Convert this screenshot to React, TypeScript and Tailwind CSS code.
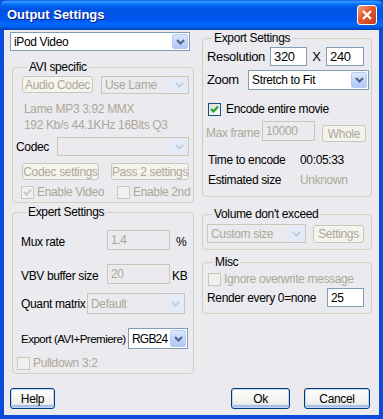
import type { ReactNode } from "react";

const disabledText = "text-[#ACA899]";

function Chevron({ disabled }: { disabled?: boolean }) {
  return (
    <svg width="9" height="6" viewBox="0 0 9 6">
      <polyline
        points="1,1 4.5,4.5 8,1"
        fill="none"
        stroke={disabled ? "#C3CCE0" : "#4D6185"}
        strokeWidth="2"
      />
    </svg>
  );
}

function Combo({ value, disabled, className }: { value?: string; disabled?: boolean; className: string }) {
  return (
    <div
      className={`flex shrink-0 border ${
        disabled ? "border-[#C9C7BA] bg-[#EBEAEE] text-[#ACA899]" : "border-[#7F9DB9] bg-white text-black"
      } ${className}`}
    >
      <span className="flex flex-1 items-center overflow-hidden pl-[3px]">{value}</span>
      <span
        className={`m-[1px] flex w-[16px] shrink-0 items-center justify-center rounded-[2px] border ${
          disabled
            ? "border-[#E1E8F7] bg-[#E4EBF8]"
            : "border-[#B9CCF5] bg-[linear-gradient(to_bottom,#DCE6FC,#C1D3FB_60%,#B1C6F6)]"
        }`}
      >
        <Chevron disabled={disabled} />
      </span>
    </div>
  );
}

function Btn({ label, disabled, className }: { label: string; disabled?: boolean; className: string }) {
  return (
    <div
      className={`flex shrink-0 items-center justify-center rounded-[3px] border ${
        disabled
          ? "border-[#C9C7BA] bg-[#F4F3EE] text-[#ACA899]"
          : "border-[#003C74] bg-[linear-gradient(to_bottom,#FFFFFF,#F1F0EC_70%,#D8DCE6)] text-black shadow-[inset_0_0_0_1px_#C2D5F7,inset_0_-2px_0_1px_#A9C0EC]"
      } ${className}`}
    >
      {label}
    </div>
  );
}

function Field({ value, disabled, className }: { value: string; disabled?: boolean; className: string }) {
  return (
    <div
      className={`flex shrink-0 items-center border pl-[3px] ${
        disabled ? "border-[#C9C7BA] bg-[#EBEAEE] text-[#ACA899]" : "border-[#7F9DB9] bg-white text-black"
      } ${className}`}
    >
      {value}
    </div>
  );
}

function Check({ checked, disabled }: { checked?: boolean; disabled?: boolean }) {
  return (
    <span
      className={`flex h-[13px] w-[13px] shrink-0 items-center justify-center border ${
        disabled
          ? "border-[#CAC8BB] bg-[#F1F0EF]"
          : "border-[#1C5180] bg-[linear-gradient(135deg,#DCDCD7,#FFFFFF)]"
      }`}
    >
      {checked && (
        <svg width="9" height="9" viewBox="0 0 9 9">
          <polyline
            points="1,4 3.5,6.5 8,1.5"
            fill="none"
            stroke={disabled ? "#CAC8BB" : "#21A121"}
            strokeWidth="2"
          />
        </svg>
      )}
    </span>
  );
}

function Group({ title, className, children }: { title: string; className: string; children: ReactNode }) {
  return (
    <fieldset className={`shrink-0 rounded-[4px] border border-[#D0D0BF] ${className}`}>
      <legend className="ml-[5px] px-[2px] leading-[14px] text-black">{title}</legend>
      {children}
    </fieldset>
  );
}

export default function App() {
  return (
    <div
      className="relative flex h-[419px] w-[383px] flex-col overflow-hidden whitespace-nowrap bg-[#0A4BDB] text-[12px] leading-[14px] tracking-[-0.35px] text-black"
      style={{ fontFamily: '"Liberation Sans", Arial, sans-serif' }}
    >
      {/* title bar */}
      <div className="flex h-[30px] shrink-0 items-center rounded-t-[7px] bg-[linear-gradient(to_bottom,#0058EE_0%,#3593FF_5%,#288EFF_8%,#127DFF_12%,#036FFC_15%,#0262EE_20%,#0057E5_28%,#0054E3_35%,#0055EB_60%,#005BF5_70%,#026AFE_80%,#0062EF_88%,#0052D6_94%,#0040AB_100%)] pl-[7px] pr-[6px]">
        <span className="text-[13px] font-bold tracking-[0px] text-white [text-shadow:1px_1px_0_#0A1883]">
          Output Settings
        </span>
        <span className="ml-auto flex h-[20px] w-[20px] items-center justify-center rounded-[3px] border border-white bg-[linear-gradient(135deg,#F0A080,#E3582F_45%,#C0401F)]">
          <svg width="10" height="10" viewBox="0 0 10 10">
            <path d="M1 1 L9 9 M9 1 L1 9" stroke="white" strokeWidth="2.2" />
          </svg>
        </span>
      </div>

      {/* client area */}
      <div className="mx-[4px] mb-[4px] flex flex-1 flex-col bg-[#EBEAEE] pl-[6px] pr-[7px]">
        <div className="flex gap-[8px]">
          {/* left column */}
          <div className="flex w-[184px] flex-col">
            <Combo value="iPod Video" className="mt-[2px] h-[19px] w-[180px]" />

            <Group title="AVI specific" className="mt-[9px] ml-[2px] h-[143px] w-[182px] pl-[9px]">
              <div className="mt-[2px] flex gap-[8px]">
                <Btn label="Audio Codec" disabled className="h-[17px] w-[71px]" />
                <Combo value="Use Lame" disabled className="h-[18px] w-[88px]" />
              </div>
              <div className={`mt-[8px] ml-[2px] ${disabledText}`}>Lame MP3 3.92 MMX</div>
              <div className={`mt-[2px] ml-[2px] ${disabledText}`}>192 Kb/s 44.1KHz 16Bits Q3</div>
              <div className="mt-[5px] ml-[-6px] flex items-center">
                <span className="w-[41px]">Codec</span>
                <Combo disabled className="h-[19px] w-[132px]" />
              </div>
              <div className="mt-[7px] flex gap-[12px]">
                <Btn label="Codec settings" disabled className="h-[17px] w-[77px]" />
                <Btn label="Pass 2 settings" disabled className="h-[17px] w-[78px]" />
              </div>
              <div className="mt-[5px] ml-[-1px] flex items-center">
                <Check checked disabled />
                <span className={`ml-[3px] w-[80px] ${disabledText}`}>Enable Video</span>
                <Check disabled />
                <span className={`ml-[3px] ${disabledText}`}>Enable 2nd</span>
              </div>
            </Group>

            <Group title="Expert Settings" className="mt-[2px] ml-[2px] h-[169px] w-[182px] pl-[8px]">
              <div className="mt-[11px] flex items-center">
                <span className="mt-[4px] w-[86px]">Mux rate</span>
                <Field value="1.4" disabled className="h-[20px] w-[63px]" />
                <span className="ml-[6px] mt-[3px]">%</span>
              </div>
              <div className="mt-[14px] flex items-center">
                <span className="mt-[4px] w-[86px]">VBV buffer size</span>
                <Field value="20" disabled className="h-[20px] w-[63px]" />
                <span className="ml-[2px] mt-[3px]">KB</span>
              </div>
              <div className="mt-[9px] flex items-center">
                <span className="w-[66px]">Quant matrix</span>
                <Combo value="Default" disabled className="h-[21px] w-[98px]" />
              </div>
              <div className="mt-[14px] flex items-center">
                <span className="w-[107px] shrink-0 overflow-hidden text-[11.5px] tracking-[-0.5px]">Export (AVI+Premiere)</span>
                <Combo value="RGB24" className="h-[21px] w-[60px] tracking-[-0.8px]" />
              </div>
              <div className="mt-[7px] ml-[-4px] flex items-center">
                <Check disabled />
                <span className={`ml-[3px] ${disabledText}`}>Pulldown 3:2</span>
              </div>
            </Group>
          </div>

          {/* right column */}
          <div className="flex w-[170px] flex-col">
            <Group title="Export Settings" className="mt-[1px] h-[166px] w-[170px] pl-[4px]">
              <div className="mt-[2px] flex items-center">
                <span className="w-[63px] text-[13px]">Resolution</span>
                <Field value="320" className="h-[19px] w-[37px] text-[13px]" />
                <span className="w-[19px] text-center text-[13px]">X</span>
                <Field value="240" className="h-[19px] w-[38px] text-[13px]" />
              </div>
              <div className="mt-[4px] flex items-center">
                <span className="w-[41px] text-[13px]">Zoom</span>
                <Combo value="Stretch to Fit" className="h-[20px] w-[121px]" />
              </div>
              <div className="mt-[12px] ml-[1px] flex items-center">
                <Check checked />
                <span className="ml-[5px]">Encode entire movie</span>
              </div>
              <div className="mt-[5px] ml-[-1px] flex items-start">
                <span className={`mt-[5px] w-[56px] ${disabledText}`}>Max frame</span>
                <Field value="10000" disabled className="h-[20px] w-[53px]" />
                <Btn label="Whole" disabled className="mt-[4px] ml-[7px] h-[17px] w-[44px]" />
              </div>
              <div className="mt-[11px] ml-[1px] flex">
                <span className="w-[92px]">Time to encode</span>
                <span>00:05:33</span>
              </div>
              <div className="mt-[6px] ml-[1px] flex">
                <span className="w-[92px]">Estimated size</span>
                <span className={disabledText}>Unknown</span>
              </div>
            </Group>

            <Group title="Volume don't exceed" className="mt-[10px] h-[43px] w-[170px] pl-[4px]">
              <div className="mt-[3px] flex items-center">
                <Combo value="Custom size" disabled className="h-[19px] w-[99px]" />
                <Btn label="Settings" disabled className="ml-[7px] h-[18px] w-[51px]" />
              </div>
            </Group>

            <Group title="Misc" className="mt-[5px] h-[59px] w-[170px] pl-[5px]">
              <div className="mt-[3px] flex items-center">
                <Check disabled />
                <span className={`ml-[3px] ${disabledText}`}>Ignore overwrite message</span>
              </div>
              <div className="mt-[2px] ml-[-1px] flex items-center">
                <span className="w-[120px]">Render every 0=none</span>
                <Field value="25" className="h-[19px] w-[37px]" />
              </div>
            </Group>
          </div>
        </div>

        {/* bottom buttons */}
        <div className="mt-[14px] mr-[2px] flex">
          <Btn label="Help" className="h-[21px] w-[45px]" />
          <Btn label="Ok" className="ml-auto h-[21px] w-[59px]" />
          <Btn label="Cancel" className="ml-[14px] h-[21px] w-[66px]" />
        </div>
      </div>
    </div>
  );
}
